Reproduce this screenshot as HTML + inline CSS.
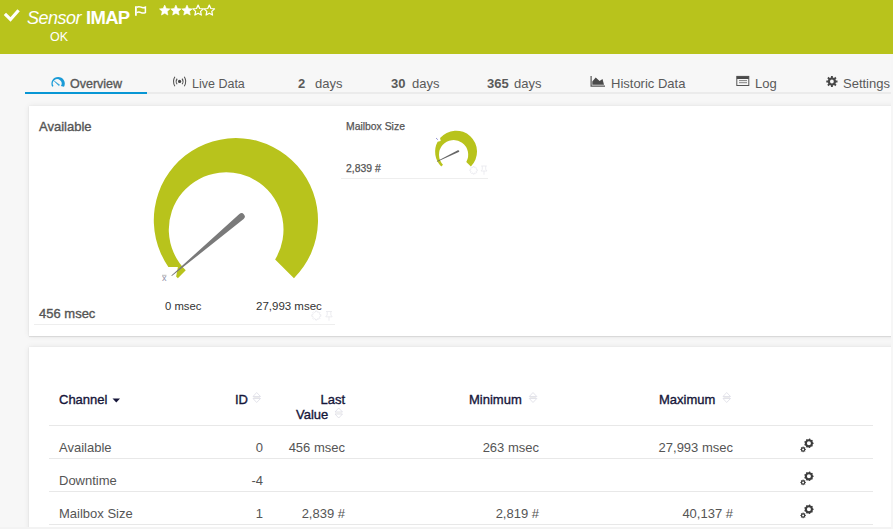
<!DOCTYPE html>
<html><head><meta charset="utf-8">
<style>
*{margin:0;padding:0;box-sizing:border-box}
html,body{width:893px;height:529px;overflow:hidden;background:#f7f7f7;font-family:"Liberation Sans",sans-serif;color:#555}
.abs{position:absolute;white-space:nowrap}
#hdr{position:absolute;left:0;top:0;width:893px;height:54px;background:#b8c31c}
.tab{position:absolute;top:77px;font-size:13px;color:#5a5a5a;line-height:14px;white-space:nowrap}
.panel{position:absolute;background:#fff;box-shadow:0 1px 1px rgba(0,0,0,0.08),0 0 1px rgba(0,0,0,0.08),0 0 6px rgba(0,0,0,0.08)}
.th{position:absolute;font-size:13px;-webkit-text-stroke:0.35px #16163a;color:#16163a;line-height:15px;margin-top:0px;white-space:nowrap}
.td{position:absolute;font-size:13px;color:#555;line-height:14px;white-space:nowrap}
.row{position:absolute;left:49px;width:824px;height:1px;background:#e8e8e8}
svg.ov{position:absolute;left:0;top:0}
</style></head>
<body>
<div id="hdr"></div>
<div class="abs" style="left:27px;top:8px;font-size:18px;line-height:20px;color:#fff"><i style="letter-spacing:-0.5px">Sensor</i> <b style="font-size:18.5px;letter-spacing:-0.7px">IMAP</b></div>
<div class="abs" style="left:50px;top:30px;font-size:12.5px;line-height:14px;color:#fff">OK</div>

<!-- tabs -->
<div class="abs" style="left:25px;top:92px;width:866px;height:2px;background:#ebebeb"></div>
<div class="abs" style="left:25px;top:92px;width:122px;height:2px;background:#0896d4"></div>
<div class="tab" style="left:70px;font-size:12.5px;-webkit-text-stroke:0.35px #555">Overview</div>
<div class="tab" style="left:192px;font-size:12.5px">Live Data</div>
<div class="tab" style="left:298px"><b>2</b></div><div class="tab" style="left:315px">days</div>
<div class="tab" style="left:391px"><b>30</b></div><div class="tab" style="left:412px">days</div>
<div class="tab" style="left:487px"><b>365</b></div><div class="tab" style="left:514px">days</div>
<div class="tab" style="left:611px">Historic Data</div>
<div class="tab" style="left:755px">Log</div>
<div class="tab" style="left:843px">Settings</div>

<!-- panel 1 -->
<div class="panel" style="left:29px;top:106px;width:870px;height:230px"></div>
<div class="abs" style="left:39px;top:120px;font-size:13px;-webkit-text-stroke:0.35px #555;color:#555;line-height:14px">Available</div>
<div class="abs" style="left:39px;top:307px;font-size:13px;-webkit-text-stroke:0.35px #555;color:#555;line-height:14px">456 msec</div>
<div class="abs" style="left:34px;top:324px;width:301px;height:1px;background:#eee"></div>
<div class="abs" style="left:165px;top:299px;font-size:11.3px;color:#333;line-height:14px">0 msec</div>
<div class="abs" style="left:256px;top:299px;font-size:11.5px;color:#333;line-height:14px">27,993 msec</div>

<div class="abs" style="left:346px;top:121px;font-size:10.4px;-webkit-text-stroke:0.25px #555;color:#555;line-height:12px">Mailbox Size</div>
<div class="abs" style="left:346px;top:163px;font-size:10.4px;-webkit-text-stroke:0.25px #555;color:#555;line-height:12px">2,839 #</div>
<div class="abs" style="left:341px;top:178px;width:147px;height:1px;background:#eee"></div>

<!-- panel 2 -->
<div class="panel" style="left:29px;top:347px;width:870px;height:200px"></div>
<div class="th" style="left:59px;top:392px">Channel</div>
<div class="th" style="left:235px;top:392px">ID</div>
<div class="th" style="left:297px;top:392px;width:48px;text-align:right">Last</div>
<div class="th" style="left:296px;top:407px">Value</div>
<div class="th" style="left:469px;top:392px">Minimum</div>
<div class="th" style="left:659px;top:392px">Maximum</div>
<div class="row" style="top:425px"></div>
<div class="row" style="top:458px"></div>
<div class="row" style="top:491px"></div>
<div class="row" style="top:524px"></div>

<div class="td" style="left:59px;top:441px">Available</div>
<div class="td" style="left:59px;top:474px">Downtime</div>
<div class="td" style="left:59px;top:507px">Mailbox Size</div>
<div class="td" style="left:163px;top:441px;width:100px;text-align:right">0</div>
<div class="td" style="left:163px;top:474px;width:100px;text-align:right">-4</div>
<div class="td" style="left:163px;top:507px;width:100px;text-align:right">1</div>
<div class="td" style="left:245px;top:441px;width:100px;text-align:right">456 msec</div>
<div class="td" style="left:245px;top:507px;width:100px;text-align:right">2,839 #</div>
<div class="td" style="left:439px;top:441px;width:100px;text-align:right">263 msec</div>
<div class="td" style="left:439px;top:507px;width:100px;text-align:right">2,819 #</div>
<div class="td" style="left:633px;top:441px;width:100px;text-align:right">27,993 msec</div>
<div class="td" style="left:633px;top:507px;width:100px;text-align:right">40,137 #</div>

<div class="abs" style="left:0;top:527px;width:893px;height:2px;background:#f3f3f3"></div>
<div class="abs" style="left:891px;top:54px;width:2px;height:475px;background:#f6f6f6"></div>
<svg class="ov" width="893" height="529" viewBox="0 0 893 529">
<!-- header icons -->
<path d="M4.9,13.9 L10.5,19.5 L18.6,10.3" fill="none" stroke="#fff" stroke-width="3.2"/>
<path d="M135.9,6.3 V15.7" stroke="#fff" stroke-width="1.8"/>
<path d="M136.6,7.2 Q139,6.2 141,7.2 T145.4,7.2 V12.6 Q143,13.6 141,12.6 T136.6,12.6" fill="none" stroke="#fff" stroke-width="1.5"/>
<path d="M164.70,5.10 L166.23,8.50 L169.93,8.90 L167.17,11.40 L167.93,15.05 L164.70,13.20 L161.47,15.05 L162.23,11.40 L159.47,8.90 L163.17,8.50Z" fill="#fff" stroke="#fff" stroke-width="0.6" stroke-linejoin="round"/><path d="M175.90,5.10 L177.43,8.50 L181.13,8.90 L178.37,11.40 L179.13,15.05 L175.90,13.20 L172.67,15.05 L173.43,11.40 L170.67,8.90 L174.37,8.50Z" fill="#fff" stroke="#fff" stroke-width="0.6" stroke-linejoin="round"/><path d="M187.00,5.10 L188.53,8.50 L192.23,8.90 L189.47,11.40 L190.23,15.05 L187.00,13.20 L183.77,15.05 L184.53,11.40 L181.77,8.90 L185.47,8.50Z" fill="#fff" stroke="#fff" stroke-width="0.6" stroke-linejoin="round"/><path d="M198.10,5.10 L199.63,8.50 L203.33,8.90 L200.57,11.40 L201.33,15.05 L198.10,13.20 L194.87,15.05 L195.63,11.40 L192.87,8.90 L196.57,8.50Z" fill="none" stroke="#fff" stroke-width="1.25" stroke-linejoin="round"/><path d="M209.30,5.10 L210.83,8.50 L214.53,8.90 L211.77,11.40 L212.53,15.05 L209.30,13.20 L206.07,15.05 L206.83,11.40 L204.07,8.90 L207.77,8.50Z" fill="none" stroke="#fff" stroke-width="1.25" stroke-linejoin="round"/>
<!-- tab icons -->
<path d="M52.2,86.8 A6.7,6.7 0 1 1 64.0,86.8 L60.9,86 A4.4,4.4 0 1 0 53.5,86 Z" fill="#1a9bd7"/>
<path d="M54.3,81.1 L59.6,84.9 L58.7,85.6 Z" fill="#1a9bd7" stroke="#1a9bd7" stroke-width="0.5"/>
<g fill="none" stroke="#555" stroke-width="1.05">
<path d="M174.9,76.8 A9,9 0 0 0 174.9,86.2 M184.3,76.8 A9,9 0 0 1 184.3,86.2"/>
<path d="M177.1,78.6 A5,5 0 0 0 177.1,84.2 M182.1,78.6 A5,5 0 0 1 182.1,84.2"/>
</g>
<circle cx="179.6" cy="81.4" r="1.6" fill="#444"/>
<path d="M591.1,75.9 V86.8 M591,86.2 H605" stroke="#555" stroke-width="1.2"/>
<path d="M592.3,84.8 L592.3,81.5 L595.7,77.4 L599.6,81 L602.5,79.1 L604,84.8 Z" fill="#4a4a4a"/>
<rect x="736.8" y="76.4" width="12" height="9.1" fill="none" stroke="#555" stroke-width="1"/>
<rect x="736.8" y="76.4" width="12" height="2.6" fill="#4a4a4a"/>
<path d="M739,80.6 H747 M739,82.7 H747" stroke="#777" stroke-width="0.9"/>
<path d="M835.98,80.52 L837.52,80.56 L837.52,82.44 L835.98,82.48 L835.48,83.69 L836.54,84.81 L835.21,86.14 L834.09,85.08 L832.88,85.58 L832.84,87.12 L830.96,87.12 L830.92,85.58 L829.71,85.08 L828.59,86.14 L827.26,84.81 L828.32,83.69 L827.82,82.48 L826.28,82.44 L826.28,80.56 L827.82,80.52 L828.32,79.31 L827.26,78.19 L828.59,76.86 L829.71,77.92 L830.92,77.42 L830.96,75.88 L832.84,75.88 L832.88,77.42 L834.09,77.92 L835.21,76.86 L836.54,78.19 L835.48,79.31Z M830.00,81.50 a1.9,1.9 0 1 0 3.80,0 a1.9,1.9 0 1 0 -3.80,0Z" fill="#474747" fill-rule="evenodd"/>
<!-- big gauge -->
<path fill="#b8c31c" d="M168.38,266.9 A82.1,82.1 0 1 1 293.95,278.25 L275.14,259.44 A57.35,57.35 0 1 0 185.76,270.34 L177.85,278.25 L176.14,276.5 L177.9,266.9 Z"/>
<path fill="#7a7a7a" d="M171.86,276.11 L243.63,219.02 A3.3,3.3 0 0 0 239.37,213.98 L171.34,275.49 Z"/>
<text x="162" y="281" font-family="Liberation Sans" font-size="9" fill="#9090a8">x</text>
<path d="M162,275.3 H166.5" stroke="#aaa" stroke-width="0.8"/>
<!-- faint icons big gauge -->
<g fill="none" stroke="#e8e8ee" stroke-width="0.8">
<path d="M319.80,314.66 L320.84,314.74 L320.84,316.26 L319.80,316.34 L319.37,317.38 L320.04,318.17 L318.97,319.24 L318.18,318.57 L317.14,319.00 L317.06,320.04 L315.54,320.04 L315.46,319.00 L314.42,318.57 L313.63,319.24 L312.56,318.17 L313.23,317.38 L312.80,316.34 L311.76,316.26 L311.76,314.74 L312.80,314.66 L313.23,313.62 L312.56,312.83 L313.63,311.76 L314.42,312.43 L315.46,312.00 L315.54,310.96 L317.06,310.96 L317.14,312.00 L318.18,312.43 L318.97,311.76 L320.04,312.83 L319.37,313.62Z"/>
<path d="M326,311.5 H332 M327.2,311.5 V315 L325.8,316.8 H332.2 L330.8,315 V311.5 M329,316.8 V320.8"/>
</g>
<!-- mini gauge -->
<path fill="#b8c31c" d="M437.61,141.7 L440.7,141 L440.07,138.1 A20.95,20.95 0 1 1 470.86,166.46 L466.29,161.89 A14.6,14.6 0 1 0 442.99,164.71 L441.24,166.46 A20.95,20.95 0 0 1 437.61,141.7 Z"/>
<path fill="#666" d="M437.13,161.67 L458.73,152.1 A1.0,1.0 0 0 0 457.87,150.3 L436.87,161.13 Z"/>
<g fill="none" stroke="#e8e8ee" stroke-width="0.8">
<path d="M476.52,169.60 L477.35,169.68 L477.35,170.92 L476.52,171.00 L476.16,171.87 L476.69,172.51 L475.81,173.39 L475.17,172.86 L474.30,173.22 L474.22,174.05 L472.98,174.05 L472.90,173.22 L472.03,172.86 L471.39,173.39 L470.51,172.51 L471.04,171.87 L470.68,171.00 L469.85,170.92 L469.85,169.68 L470.68,169.60 L471.04,168.73 L470.51,168.09 L471.39,167.21 L472.03,167.74 L472.90,167.38 L472.98,166.55 L474.22,166.55 L474.30,167.38 L475.17,167.74 L475.81,167.21 L476.69,168.09 L476.16,168.73Z"/>
<path d="M481.2,166 H486.8 M482.3,166 V169.3 L481,171 H487 L485.7,169.3 V166 M484,171 V174.8"/>
</g>
<path d="M436,138 L437.9,139.8" stroke="#8c8cd0" stroke-width="0.9"/>
<!-- table -->
<path d="M112.5,398.5 H120 L116.25,402.6 Z" fill="#16163a"/>
<path d="M253.0,396.5 L256.7,392.5 L260.5,396.5Z M253.0,398.5 L256.7,402.5 L260.5,398.5Z" fill="none" stroke="#dcdce4" stroke-width="0.8"/><path d="M253.5,397.5 H260.0" stroke="#ececec" stroke-width="1"/><path d="M335.0,412.0 L338.7,408.0 L342.5,412.0Z M335.0,414.0 L338.7,418.0 L342.5,414.0Z" fill="none" stroke="#dcdce4" stroke-width="0.8"/><path d="M335.5,413.0 H342.0" stroke="#ececec" stroke-width="1"/><path d="M529.3,396.5 L533.0,392.5 L536.8,396.5Z M529.3,398.5 L533.0,402.5 L536.8,398.5Z" fill="none" stroke="#dcdce4" stroke-width="0.8"/><path d="M529.8,397.5 H536.3" stroke="#ececec" stroke-width="1"/><path d="M723.0,396.5 L726.7,392.5 L730.5,396.5Z M723.0,398.5 L726.7,402.5 L730.5,398.5Z" fill="none" stroke="#dcdce4" stroke-width="0.8"/><path d="M723.5,397.5 H730.0" stroke="#ececec" stroke-width="1"/>
<path d="M812.92,442.50 L813.56,442.66 L813.56,443.94 L812.92,444.10 L812.49,445.28 L812.88,445.80 L812.05,446.78 L811.47,446.50 L810.38,447.12 L810.34,447.77 L809.08,448.00 L808.81,447.40 L807.58,447.18 L807.13,447.65 L806.02,447.01 L806.20,446.38 L805.39,445.42 L804.74,445.49 L804.31,444.29 L804.85,443.93 L804.85,442.67 L804.31,442.31 L804.74,441.11 L805.39,441.18 L806.20,440.22 L806.02,439.59 L807.13,438.95 L807.58,439.42 L808.81,439.20 L809.08,438.60 L810.34,438.83 L810.38,439.48 L811.47,440.10 L812.05,439.82 L812.88,440.80 L812.49,441.32Z M806.90,443.30 a2.0,2.0 0 1 0 4.00,0 a2.0,2.0 0 1 0 -4.00,0Z" fill="#3c3c3c" fill-rule="evenodd"/><path d="M805.36,448.95 L805.97,449.00 L805.97,449.80 L805.36,449.85 L805.01,450.68 L805.41,451.15 L804.85,451.71 L804.38,451.31 L803.55,451.66 L803.50,452.27 L802.70,452.27 L802.65,451.66 L801.82,451.31 L801.35,451.71 L800.79,451.15 L801.19,450.68 L800.84,449.85 L800.23,449.80 L800.23,449.00 L800.84,448.95 L801.19,448.12 L800.79,447.65 L801.35,447.09 L801.82,447.49 L802.65,447.14 L802.70,446.53 L803.50,446.53 L803.55,447.14 L804.38,447.49 L804.85,447.09 L805.41,447.65 L805.01,448.12Z M802.10,449.40 a1.0,1.0 0 1 0 2.00,0 a1.0,1.0 0 1 0 -2.00,0Z" fill="#3c3c3c" fill-rule="evenodd"/><path d="M812.92,475.50 L813.56,475.66 L813.56,476.94 L812.92,477.10 L812.49,478.28 L812.88,478.80 L812.05,479.78 L811.47,479.50 L810.38,480.12 L810.34,480.77 L809.08,481.00 L808.81,480.40 L807.58,480.18 L807.13,480.65 L806.02,480.01 L806.20,479.38 L805.39,478.42 L804.74,478.49 L804.31,477.29 L804.85,476.93 L804.85,475.67 L804.31,475.31 L804.74,474.11 L805.39,474.18 L806.20,473.22 L806.02,472.59 L807.13,471.95 L807.58,472.42 L808.81,472.20 L809.08,471.60 L810.34,471.83 L810.38,472.48 L811.47,473.10 L812.05,472.82 L812.88,473.80 L812.49,474.32Z M806.90,476.30 a2.0,2.0 0 1 0 4.00,0 a2.0,2.0 0 1 0 -4.00,0Z" fill="#3c3c3c" fill-rule="evenodd"/><path d="M805.36,481.95 L805.97,482.00 L805.97,482.80 L805.36,482.85 L805.01,483.68 L805.41,484.15 L804.85,484.71 L804.38,484.31 L803.55,484.66 L803.50,485.27 L802.70,485.27 L802.65,484.66 L801.82,484.31 L801.35,484.71 L800.79,484.15 L801.19,483.68 L800.84,482.85 L800.23,482.80 L800.23,482.00 L800.84,481.95 L801.19,481.12 L800.79,480.65 L801.35,480.09 L801.82,480.49 L802.65,480.14 L802.70,479.53 L803.50,479.53 L803.55,480.14 L804.38,480.49 L804.85,480.09 L805.41,480.65 L805.01,481.12Z M802.10,482.40 a1.0,1.0 0 1 0 2.00,0 a1.0,1.0 0 1 0 -2.00,0Z" fill="#3c3c3c" fill-rule="evenodd"/><path d="M812.92,508.50 L813.56,508.66 L813.56,509.94 L812.92,510.10 L812.49,511.28 L812.88,511.80 L812.05,512.78 L811.47,512.50 L810.38,513.12 L810.34,513.77 L809.08,514.00 L808.81,513.40 L807.58,513.18 L807.13,513.65 L806.02,513.01 L806.20,512.38 L805.39,511.42 L804.74,511.49 L804.31,510.29 L804.85,509.93 L804.85,508.67 L804.31,508.31 L804.74,507.11 L805.39,507.18 L806.20,506.22 L806.02,505.59 L807.13,504.95 L807.58,505.42 L808.81,505.20 L809.08,504.60 L810.34,504.83 L810.38,505.48 L811.47,506.10 L812.05,505.82 L812.88,506.80 L812.49,507.32Z M806.90,509.30 a2.0,2.0 0 1 0 4.00,0 a2.0,2.0 0 1 0 -4.00,0Z" fill="#3c3c3c" fill-rule="evenodd"/><path d="M805.36,514.95 L805.97,515.00 L805.97,515.80 L805.36,515.85 L805.01,516.68 L805.41,517.15 L804.85,517.71 L804.38,517.31 L803.55,517.66 L803.50,518.27 L802.70,518.27 L802.65,517.66 L801.82,517.31 L801.35,517.71 L800.79,517.15 L801.19,516.68 L800.84,515.85 L800.23,515.80 L800.23,515.00 L800.84,514.95 L801.19,514.12 L800.79,513.65 L801.35,513.09 L801.82,513.49 L802.65,513.14 L802.70,512.53 L803.50,512.53 L803.55,513.14 L804.38,513.49 L804.85,513.09 L805.41,513.65 L805.01,514.12Z M802.10,515.40 a1.0,1.0 0 1 0 2.00,0 a1.0,1.0 0 1 0 -2.00,0Z" fill="#3c3c3c" fill-rule="evenodd"/>
</svg>
</body></html>
